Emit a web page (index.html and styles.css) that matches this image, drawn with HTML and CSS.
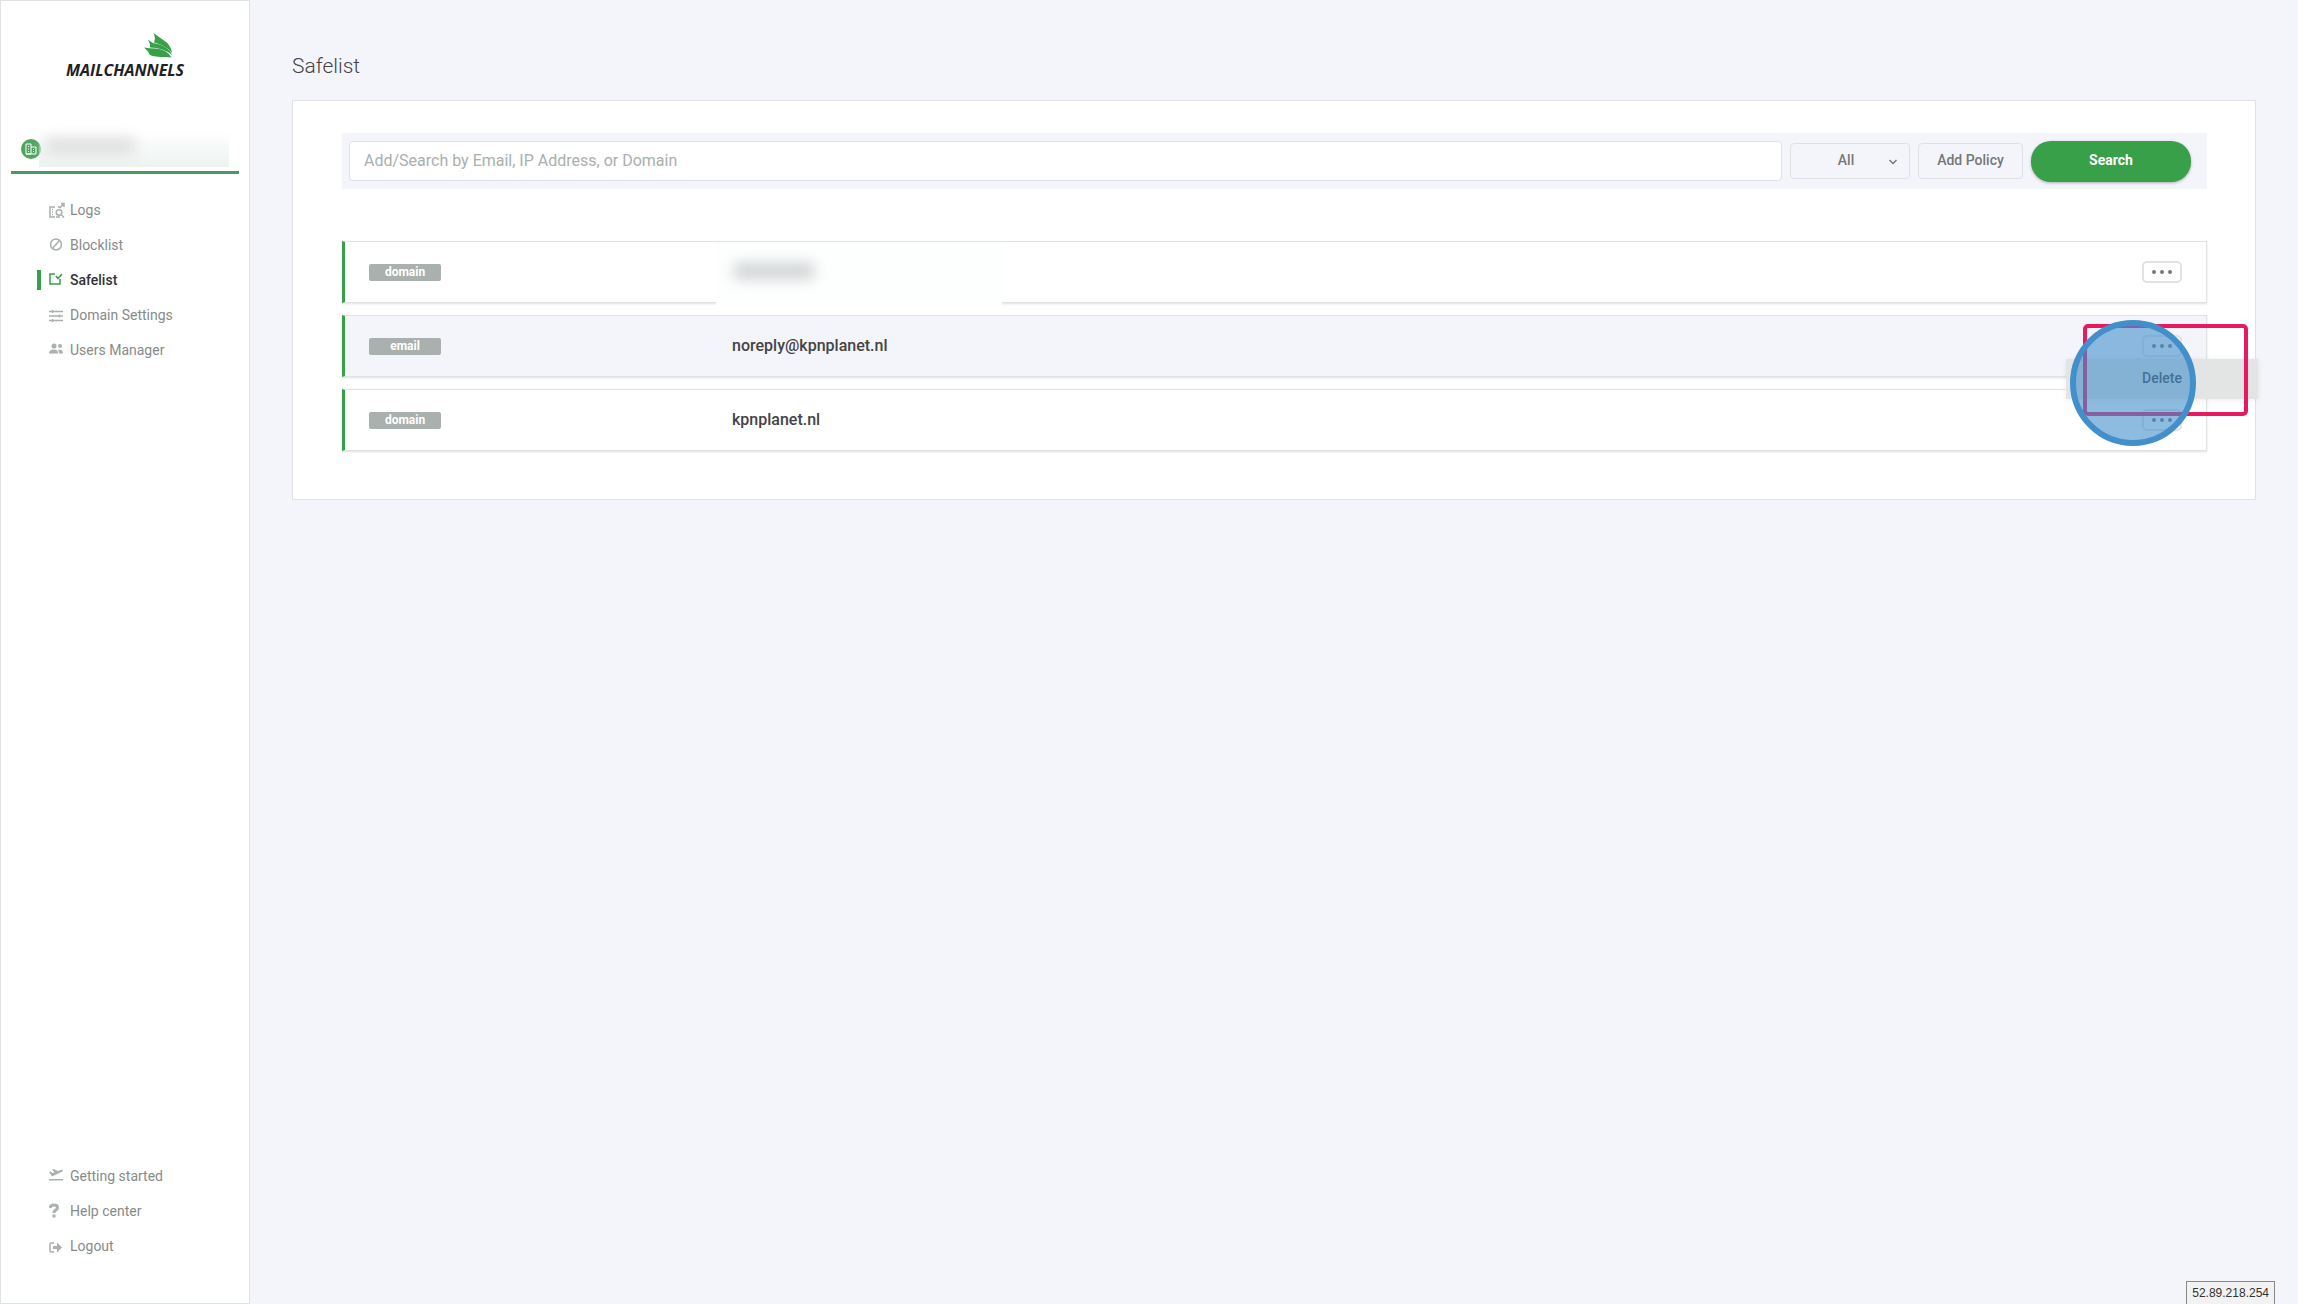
FILE: index.html
```html
<!DOCTYPE html>
<html lang="en">
<head>
    <meta charset="UTF-8">
    <meta name="viewport" content="width=device-width, initial-scale=1.0">
    <title>Safelist - MailChannels</title>
    <link rel="stylesheet" href="styles.css">
</head>
<body>
    <aside class="sidebar">
        <a href="#" class="logo">
            <svg class="logo-bird" width="30" height="26" viewBox="0 0 30 26" fill="#37a049">
                <path d="M9.500 0L22 9Q27 13 28 20Q22 12.500 10 9.500Q12 5 9.500 0Z"/>
                <path d="M3.500 6.500L9 10Q24 12 28 22Q19 14.500 6 14.500Q6.500 10 3.500 6.500Z"/>
                <path d="M0 14.500Q5 15.500 12 15.500Q23 16.500 27.500 24.500L22 24Q10 24 6 22Q4 17.500 0 14.500Z"/>
            </svg>
            <span class="logo-text">MAILCHANNELS</span>
        </a>
        <div class="account">
            <svg class="account-icon" width="20" height="20" viewBox="0 0 20 20" fill="none" stroke="#fff">
                <circle cx="10" cy="10" r="10" fill="#4fa560" stroke="none"/>
                <path d="M5 15V5h5v10zM10 8h5v7H5M7 7.500h1M7 10h1M7 12.500h1M12 10.500h1M12 12.500h1"/>
            </svg>
            <span class="account-name"></span>
        </div>
        <nav class="nav">
            <a href="#">
                <svg width="16" height="16" viewBox="0 0 16 16" fill="none" stroke="#a9b0ad" stroke-width="1.500"><path d="M6 5H1v10h5M3 7.500h1M3 10h1M3 12.500h1M9 4.500l2 1 4-4M15 5v-3.500h-3"/><circle cx="10" cy="10.500" r="2.800"/><path d="M12 12.500l3 3M7 15h4"/></svg>
                Logs
            </a>
            <a href="#">
                <svg width="16" height="16" viewBox="0 0 16 16" fill="none" stroke="#a9b0ad" stroke-width="1.500"><circle cx="7" cy="7.500" r="5.500"/><path d="M3.500 11.500l7-8"/></svg>
                Blocklist
            </a>
            <a href="#" class="active">
                <svg width="16" height="16" viewBox="0 0 16 16" fill="none" stroke="#37a049" stroke-width="1.500"><path d="M6 2H1v10h10V7M7 4l2 2.500L13 2"/></svg>
                Safelist
            </a>
            <a href="#">
                <svg width="16" height="16" viewBox="0 0 16 16" fill="none" stroke="#a9b0ad" stroke-width="1.500"><path d="M0 4.500h14M0 9h14M0 13.500h14M3.500 3v3M10.500 7.500v3M3.500 12v3"/></svg>
                Domain Settings
            </a>
            <a href="#">
                <svg width="16" height="16" viewBox="0 0 16 16" fill="#a9b0ad"><circle cx="5" cy="4" r="2.500"/><circle cx="11" cy="4" r="2"/><path d="M0 11.500Q0 7.500 5 7.500Q9 7.500 9 11.500ZM10 11.500Q10 9 9 8Q14 7 14 11.500Z"/></svg>
                Users Manager
            </a>
        </nav>
        <nav class="nav nav-bottom">
            <a href="#">
                <svg width="16" height="16" viewBox="0 0 16 16" fill="#a9b0ad"><path d="M0 11h14v1.500H0zM0 4l1.500-.5 2 1.500 2-.7L3 1.500l1.500-.5L9 3l3.500-1.200q1.500-.3 1.500.7 0 .8-1 1.200L3 8.500z"/></svg>
                Getting started
            </a>
            <a href="#">
                <svg width="16" height="16" viewBox="0 0 16 16" fill="none" stroke="#a9b0ad" stroke-width="3"><path d="M1 5Q1.500 2 5 2Q8.500 2 8.500 4.800Q8.500 6.500 6.500 7.300Q5 8 5 10"/><path d="M5 11.500v3"/></svg>
                Help center
            </a>
            <a href="#">
                <svg width="16" height="16" viewBox="0 0 16 16" fill="#a9b0ad"><path d="M5 5H2Q1 5 1 6v7q0 1 1 1h3" fill="none" stroke="#a9b0ad" stroke-width="1.500"/><path d="M4 8h4V4.500l5 5L8 14.500V11H4z"/></svg>
                Logout
            </a>
        </nav>
    </aside>

    <main class="content">
        <h1>Safelist</h1>
        <section class="card">
            <form class="search-bar" action="#">
                <input type="text" aria-label="Search policies" placeholder="Add/Search by Email, IP Address, or Domain">
                <div class="select-wrap">
                    <select aria-label="Policy type">
                        <option>All</option>
                    </select>
                    <svg class="chevron" width="10" height="6" viewBox="0 0 10 6" fill="none" stroke="#777" stroke-width="1.500"><path d="M1.500 1L5 4.500 8.500 1"/></svg>
                </div>
                <button type="button" class="add-policy">Add Policy</button>
                <button type="submit" class="search">Search</button>
            </form>

            <table class="policies">
                <tr>
                    <td class="type"><span class="badge">domain</span></td>
                    <td class="value"><span class="redacted"></span></td>
                    <td class="actions">
                        <button type="button" class="more" aria-label="More actions"><i></i><i></i><i></i></button>
                    </td>
                </tr>
                <tr class="hovered">
                    <td class="type"><span class="badge">email</span></td>
                    <td class="value">noreply@kpnplanet.nl</td>
                    <td class="actions">
                        <div class="menu-anchor">
                            <button type="button" class="more" aria-label="More actions"><i></i><i></i><i></i></button>
                            <button type="button" class="menu">Delete</button>
                            <div class="highlight-box"></div>
                            <div class="highlight-circle"></div>
                        </div>
                    </td>
                </tr>
                <tr>
                    <td class="type"><span class="badge">domain</span></td>
                    <td class="value">kpnplanet.nl</td>
                    <td class="actions">
                        <button type="button" class="more" aria-label="More actions"><i></i><i></i><i></i></button>
                    </td>
                </tr>
            </table>
        </section>
    </main>

    <div class="status">52.89.218.254</div>
</body>
</html>
```

FILE: styles.css
```css
* {
    box-sizing: border-box;
}
body {
    margin: 0;
    min-height: 100vh;
    display: flex;
    background-color: #f4f5fa;
    color: #444;
    font-family: Roboto, sans-serif;
    font-size: 14px;
}
a {
    text-decoration: none;
}
button, input, select {
    font-family: inherit;
    font-size: 14px;
    margin: 0;
}

/* sidebar */
.sidebar {
    width: 250px;
    flex-shrink: 0;
    display: flex;
    flex-direction: column;
    background-color: #fff;
    border: 1px solid #e1e3e3;
}
.logo {
    display: flex;
    flex-direction: column;
    align-items: center;
    padding-top: 32px;
    color: #222;
}
.logo-bird {
    margin-left: 68px;
}
.logo-text {
    font-family: "Open Sans", sans-serif;
    font-size: 16px;
    line-height: 22px;
    font-weight: bold;
    font-style: italic;
}
.account {
    display: flex;
    align-items: center;
    height: 43px;
    margin: 50px 10px 0;
    padding: 0 10px 4px;
    border-bottom: 3px solid #4a9a60;
}
.account-name {
    flex-grow: 1;
    height: 36px;
    margin-left: -2px;
    background: linear-gradient(to bottom, rgba(255, 255, 255, 0), rgba(233, 240, 236, 0.8));
}
.account-name::before {
    content: "";
    display: block;
    width: 90px;
    height: 16px;
    margin: 7px 0 0 6px;
    background-color: #dedede;
    filter: blur(7px);
}
.nav {
    display: flex;
    flex-direction: column;
    padding: 18px 0 0 36px;
}
.nav a {
    display: flex;
    align-items: center;
    gap: 5px;
    height: 35px;
    padding-left: 12px;
    color: #868b89;
}
.nav a.active {
    color: #333;
    font-weight: 500;
}
.nav a.active::before {
    content: "";
    width: 4px;
    height: 20px;
    margin: 0 3px 0 -12px;
    background-color: #37a049;
}
.nav-bottom {
    margin-top: auto;
    padding: 0 0 40px 36px;
}

/* page */
.content {
    flex-grow: 1;
    padding: 50px 42px 0;
}
h1 {
    margin: 0 0 18px;
    font-size: 21px;
    line-height: 32px;
    font-weight: 300;
}
.card {
    padding: 32px 48px 36px 49px;
    background-color: #fff;
    border: 1px solid #e1e3e3;
}
.search-bar {
    display: flex;
    align-items: center;
    gap: 8px;
    height: 56px;
    padding: 0 16px 0 7px;
    background-color: #f4f5fa;
}
.search-bar input {
    flex-grow: 1;
    height: 40px;
    padding: 0 14px 2px;
    border: 1px solid #dfe1e1;
    border-radius: 4px;
    font-size: 16px;
    outline: none;
}
.search-bar input::placeholder {
    color: #a9b0ad;
}
.select-wrap {
    position: relative;
}
.select-wrap select, .add-policy {
    height: 36px;
    border: 1px solid #dfe1e1;
    border-radius: 4px;
    background-color: #f4f5fa;
    color: #777;
    font-weight: 500;
}
.select-wrap select {
    width: 120px;
    padding: 0 8px 2px 0;
    appearance: none;
    text-align: center;
    text-align-last: center;
}
.chevron {
    position: absolute;
    right: 12px;
    top: 16px;
}
.add-policy {
    width: 105px;
    padding: 0 0 2px;
}
.search {
    width: 160px;
    height: 41px;
    padding: 0 0 2px;
    border: none;
    border-radius: 20px;
    background-color: #37a049;
    color: #fff;
    font-weight: bold;
    box-shadow: 0 1px 3px rgba(0, 0, 0, 0.3);
}

/* policies */
.policies {
    width: 100%;
    margin-top: 40px;
    border-collapse: separate;
    border-spacing: 0 12px;
}
.policies tr {
    box-shadow: 0 1px 2px rgba(0, 0, 0, 0.12);
}
.policies td {
    height: 62px;
    padding: 0;
    border: 1px solid #e1e3e3;
    border-width: 1px 0;
}
.policies .hovered td {
    background-color: #f4f5fa;
}
.policies .type {
    width: 390px;
    padding-left: 24px;
    border-left: 3px solid #37a049;
}
.policies .value {
    position: relative;
    padding-bottom: 2px;
    font-size: 16px;
    font-weight: 500;
}
.policies .actions {
    width: 65px;
    padding-right: 24px;
    border-right-width: 1px;
}
.badge {
    display: block;
    width: 72px;
    border-radius: 2px;
    background-color: #a9b0ad;
    color: #fff;
    font-size: 12px;
    line-height: 17px;
    font-weight: bold;
    text-align: center;
}
.redacted {
    position: absolute;
    left: -16px;
    top: 0;
    width: 286px;
    height: 64px;
    background-color: #fdfffe;
}
.redacted::after {
    content: "";
    position: absolute;
    left: 18px;
    top: 21px;
    width: 80px;
    height: 16px;
    background-color: #cfd2d4;
    filter: blur(7px);
}
.more {
    display: flex;
    align-items: center;
    justify-content: center;
    gap: 4px;
    width: 40px;
    height: 22px;
    padding: 0;
    border: 2px solid #e1e3e3;
    border-radius: 5px;
    background-color: transparent;
}
.more i {
    width: 4px;
    height: 4px;
    border-radius: 50%;
    background-color: #777;
}
.menu-anchor {
    position: relative;
    z-index: 1;
}
.menu {
    position: absolute;
    left: -76px;
    top: 24px;
    width: 192px;
    height: 40px;
    padding: 0 0 2px;
    border: none;
    background-color: #e3e5e4;
    color: #444;
    font-weight: 500;
    box-shadow: 0 1px 6px rgba(0, 0, 0, 0.08);
}

/* click marker over the open menu */
.highlight-box {
    position: absolute;
    left: -59px;
    top: -11px;
    width: 165px;
    height: 92px;
    border: 4px solid #e9185f;
    border-radius: 5px;
}
.highlight-circle {
    position: absolute;
    left: -72px;
    top: -15px;
    width: 126px;
    height: 126px;
    border: 6px solid #428fcc;
    border-radius: 50%;
    background-color: rgba(66, 143, 204, 0.6);
}

.status {
    position: fixed;
    right: 23px;
    bottom: 0;
    padding: 0 5px;
    border: 1px solid #888;
    border-bottom: none;
    background-color: #f2f2f2;
    color: #333;
    font-family: "Liberation Sans", sans-serif;
    font-size: 12px;
    line-height: 22px;
}
```
